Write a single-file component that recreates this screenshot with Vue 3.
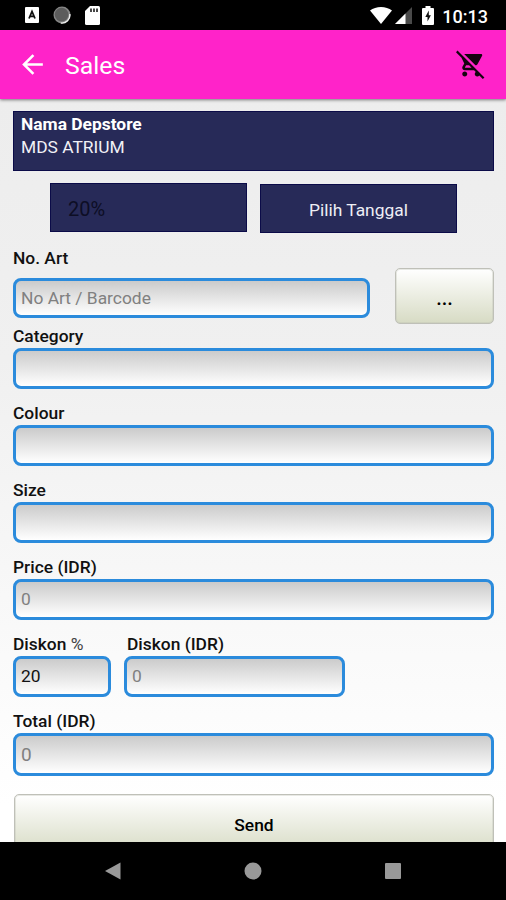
<script setup>
import { ref } from 'vue'

const article = ref('')
const category = ref('')
const colour = ref('')
const size = ref('')
const price = ref('')
const discountPercent = ref('20')
const discountAmount = ref('')
const total = ref('')
</script>

<template>
  <div class="screen">
    <header class="status">
      <div class="status-left">
        <svg class="ic-a" width="14" height="16" viewBox="0 0 14 16">
          <rect width="14" height="16" rx="1" fill="#fff" />
          <path d="M4 11.5 7 4.5l3 7M5.2 9.4h3.6" fill="none" stroke="#111" stroke-width="1.8" />
        </svg>
        <svg class="ic-sync" width="18" height="18" viewBox="0 0 18 18">
          <circle cx="9" cy="9" r="8.5" fill="#858585" />
          <path d="M16.8 8a8 8 0 0 1-9 9" fill="none" stroke="#eee" stroke-width="1.4" />
          <circle cx="8.6" cy="8.6" r="6.8" fill="#5c5c5c" />
        </svg>
        <svg class="ic-sd" width="15" height="19" viewBox="0 0 15 19">
          <path d="M5 0h8.5A1.5 1.5 0 0 1 15 1.5v16a1.5 1.5 0 0 1-1.5 1.5h-12A1.5 1.5 0 0 1 0 17.5V5z" fill="#fff" />
          <path d="M6 2.5v3.5M9 2.5v3.5M12 2.5v3.5" stroke="#333" stroke-width="1.8" />
        </svg>
      </div>
      <div class="status-right">
        <svg class="ic-wifi" width="22" height="17" viewBox="0 0 22 17">
          <path d="M11 17 0 3.5C3 1.2 6.800 0 11 0s8 1.2 11 3.5z" fill="#fff" />
        </svg>
        <svg class="ic-cell" width="17" height="17" viewBox="0 0 17 17">
          <path d="M0 17 17 0v17z" fill="#4a4a4a" />
          <path d="M0 17 10.5 6.5V17z" fill="#fff" />
        </svg>
        <svg class="ic-bat" width="12" height="19" viewBox="0 0 12 19">
          <path d="M3.5 0h5v2H11a1 1 0 0 1 1 1v15a1 1 0 0 1-1 1H1a1 1 0 0 1-1-1V3a1 1 0 0 1 1-1h2.5z" fill="#fff" />
          <path d="M6.8 4.5 3.300 11h2.200v4.500L8.900 9.300H6.800z" fill="#111" />
        </svg>
        <span class="clock">10:13</span>
      </div>
    </header>

    <nav class="toolbar">
      <svg class="back" width="31" height="31" viewBox="0 0 24 24">
        <path d="M20 11H7.83l5.59-5.59L12 4l-8 8 8 8 1.41-1.41L7.83 13H20v-2z" fill="#fff" />
      </svg>
      <h1>Sales</h1>
      <svg class="cart" width="30" height="30" viewBox="0 0 24 24">
        <path d="M22.73 22.73L2.77 2.77 2 2l-.73-.73L0 2.54l4.39 4.39 2.21 4.66-1.35 2.45c-.16.28-.25.61-.25.96 0 1.1.9 2 2 2h7.46l1.38 1.38c-.5.36-.83.95-.83 1.62 0 1.1.89 2 1.99 2 .67 0 1.26-.33 1.62-.84L21.46 24l1.27-1.27zM7.42 15c-.14 0-.25-.11-.25-.25l.03-.12.9-1.63h2.36l2 2H7.42zm8.13-2c.75 0 1.41-.41 1.75-1.03l3.58-6.49c.08-.14.12-.31.12-.48 0-.55-.45-1-1-1H6.54l9.01 9zM7 18c-1.1 0-1.99.9-1.99 2S5.9 22 7 22s2-.9 2-2-.9-2-2-2z" fill="#14040f" />
      </svg>
    </nav>

    <main class="content">
      <section class="store">
        <strong>Nama Depstore</strong>
        <span>MDS ATRIUM</span>
      </section>

      <div class="pair">
        <div class="navy rate">20%</div>
        <button class="navy date">Pilih Tanggal</button>
      </div>

      <div class="article">
        <div class="article-field">
          <label>No. Art</label>
          <input v-model="article" class="box" placeholder="No Art / Barcode" />
        </div>
        <button class="soft more">...</button>
      </div>

      <div class="field">
        <label>Category</label>
        <input v-model="category" class="box" />
      </div>
      <div class="field">
        <label>Colour</label>
        <input v-model="colour" class="box" />
      </div>
      <div class="field">
        <label>Size</label>
        <input v-model="size" class="box" />
      </div>
      <div class="field">
        <label>Price (IDR)</label>
        <input v-model="price" class="box" placeholder="0" />
      </div>
      <div class="discounts">
        <div class="field percent">
          <label>Diskon <span class="thin">%</span></label>
          <input v-model="discountPercent" class="box" />
        </div>
        <div class="field amount">
          <label>Diskon (IDR)</label>
          <input v-model="discountAmount" class="box" placeholder="0" />
        </div>
      </div>
      <div class="field total">
        <label>Total (IDR)</label>
        <input v-model="total" class="box" placeholder="0" />
      </div>

      <button class="soft send">Send</button>
    </main>

    <footer class="keys">
      <svg width="16" height="18" viewBox="0 0 16 18"><path d="M0 9 15.5.5v17z" fill="#999" /></svg>
      <svg width="18" height="18" viewBox="0 0 18 18"><circle cx="9" cy="9" r="8.5" fill="#999" /></svg>
      <svg width="16" height="16" viewBox="0 0 16 16"><rect width="16" height="16" rx="1" fill="#999" /></svg>
    </footer>
  </div>
</template>

<style>
body {
  margin: 0;
  overflow: hidden;
}
</style>

<style scoped>
.screen {
  display: flex;
  flex-direction: column;
  width: 506px;
  height: 900px;
  overflow: hidden;
  font-family: Roboto, "Liberation Sans", sans-serif;
  font-size: 17.4px;
  color: #111;
}
.screen * {
  box-sizing: border-box;
}
svg {
  display: block;
  flex: none;
}
.status {
  display: flex;
  justify-content: space-between;
  flex: none;
  height: 30px;
  background: #000;
  padding: 0 18px 0 25px;
}
.status-left,
.status-right {
  display: flex;
  align-items: center;
}
.ic-sync {
  margin-left: 14px;
}
.ic-sd {
  margin-left: 14px;
}
.ic-wifi {
  margin-left: 1px;
}
.ic-cell {
  margin-left: 3px;
}
.ic-bat {
  margin-left: 10px;
}
.clock {
  margin-left: 8px;
  padding-top: 2px;
  font-size: 18px;
  font-weight: 500;
  color: #fff;
}
.toolbar {
  display: flex;
  align-items: center;
  flex: none;
  height: 69px;
  padding: 0 20px 0 17px;
  background: #ff23c9;
  box-shadow: 0 1px 3px rgba(0, 0, 0, 0.5);
  z-index: 1;
}
.cart {
  margin-top: -1px;
}
h1 {
  flex: 1;
  margin: 2px 0 0 17px;
  font-size: 24.8px;
  font-weight: 400;
  color: #fff;
}
.content {
  flex: 1;
  min-height: 0;
  overflow: hidden;
  padding: 12px 12px 0 13px;
  background: linear-gradient(#ededed, #f0f0f0 35%, #fff 95%);
}
.store {
  display: flex;
  flex-direction: column;
  height: 60px;
  padding: 1px 7px;
  border: 1px solid #0b0b48;
  background: #272a58;
  color: #f1f1f6;
  line-height: 23px;
}
.store strong {
  font-weight: 700;
  color: #fff;
}
.pair {
  display: flex;
  gap: 13px;
  margin: 12px 0 0 37px;
}
.navy {
  display: flex;
  align-items: center;
  width: 197px;
  height: 49px;
  border: 1px solid #0b0b48;
  background: #272a58;
  font-family: inherit;
}
.rate {
  padding: 3px 0 0 17px;
  font-size: 20px;
  color: #0d0e25;
}
.date {
  justify-content: center;
  margin-top: 1px;
  padding: 2px 0 0;
  font-size: 17.4px;
  color: #eeeef5;
}
.article {
  display: flex;
  justify-content: space-between;
  align-items: flex-end;
  height: 91px;
}
.article-field {
  width: 357px;
  padding-bottom: 6px;
}
label {
  display: block;
  height: 23px;
  line-height: 23px;
  font-weight: 500;
  white-space: pre;
}
.article-field label {
  margin-bottom: 8px;
}
.thin {
  font-weight: 400;
  color: #444;
}
.box {
  display: block;
  width: 100%;
  height: 40.5px;
  padding: 0 5px;
  border: 3px solid #2b8bdc;
  border-radius: 8px;
  background: linear-gradient(#cbcbcb, #fff);
  font-family: inherit;
  font-size: 17.4px;
  color: #111;
  outline: none;
}
.box::placeholder {
  color: #808080;
  opacity: 1;
}
.soft {
  display: block;
  padding: 1px 0 0;
  border: 1px solid #bfc0b8;
  border-radius: 5px;
  background: linear-gradient(#fff, #d7dbc4);
  box-shadow: inset 0 0 0 1px rgba(190, 192, 180, 0.35);
  font-family: inherit;
  font-size: 17.4px;
  font-weight: 500;
  color: #000;
}
.more {
  width: 99px;
  height: 56px;
  padding-top: 4px;
  font-size: 20px;
}
.field {
  height: 77px;
  padding-top: 1px;
}
.discounts {
  display: flex;
  gap: 13px;
}
.percent {
  width: 98px;
}
.amount {
  width: 221px;
}
.amount label {
  padding-left: 3px;
}
.total {
  height: 85px;
}
.total .box {
  height: 43px;
  font-size: 19px;
}
.send {
  width: 480px;
  height: 60px;
  margin-left: 1px;
}
.keys {
  display: flex;
  align-items: center;
  gap: 123px;
  flex: none;
  height: 58px;
  padding-left: 105px;
  background: #000;
}
</style>
